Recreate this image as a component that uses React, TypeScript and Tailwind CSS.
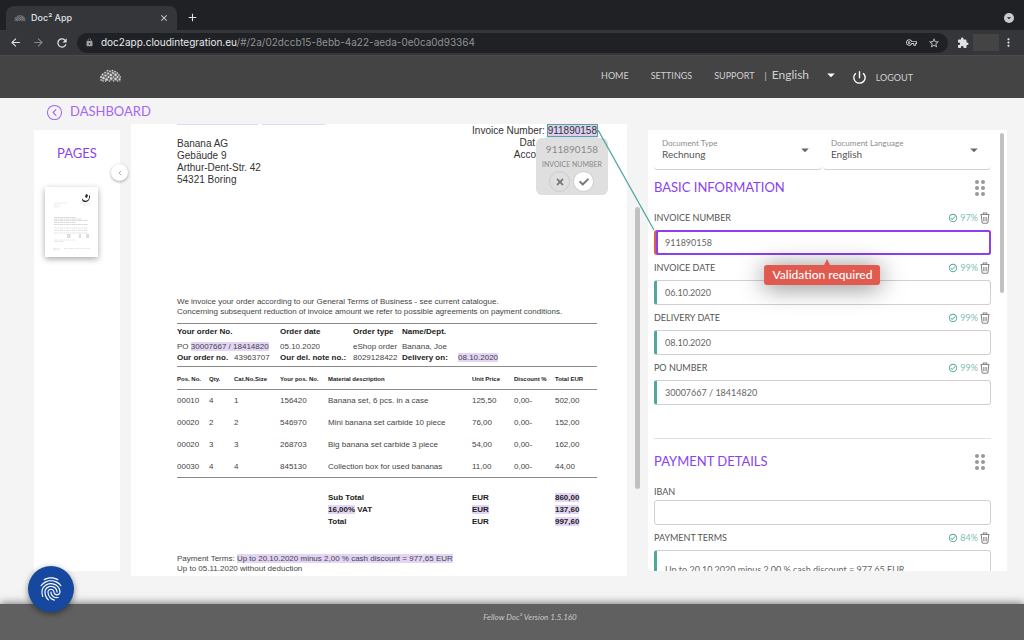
import type { ReactNode } from "react";
import { CircleChevronLeft, ChevronLeft } from "lucide-react";
import {
  MdArrowBack,
  MdArrowForward,
  MdRefresh,
  MdLock,
  MdOutlineVpnKey,
  MdStarBorder,
  MdExtension,
  MdMoreVert,
  MdPowerSettingsNew,
  MdFingerprint,
  MdArrowDropDown,
  MdOutlineCheckCircle,
  MdClose,
  MdAdd,
} from "react-icons/md";
import { FaCheck, FaTimes } from "react-icons/fa";

const brainDots: [number, number, number][] = [
  [2, 9, 1], [2, 12, 0.8], [3.5, 6.5, 0.9], [4.5, 10, 1.2], [4, 13, 0.8], [6, 4.5, 0.8],
  [6.5, 7.5, 1.1], [7.5, 11.5, 1.3], [8.5, 2.5, 0.8], [9, 5.5, 0.9], [9.5, 9, 1], [10.5, 13, 0.8],
  [11, 3.2, 0.8], [11.8, 7, 1.2], [12.2, 10.5, 1.2], [13.5, 2.5, 0.7], [14, 5, 0.9], [14.5, 9, 0.8],
  [14.6, 13, 0.7], [16, 3.5, 0.8], [16.5, 6.8, 1.2], [16.5, 11, 1.2], [18.3, 5, 0.8], [18.5, 9, 1],
  [18.5, 13, 0.8], [20, 7, 0.8], [20.6, 11.2, 1], [21.4, 9, 0.7], [6.6, 13.3, 0.6], [21, 13, 0.6],
];

function BrainLogo({ className }: { className: string }) {
  return (
    <svg viewBox="0 0 23 15" className={className} fill="currentColor" aria-hidden="true">
      <path d="M2 13C0 8 4 3 11.500 2 18 2 23 7 21 13z" opacity="0.25" />
      {brainDots.map(([x, y, r]) => (
        <circle key={`${x}-${y}`} cx={x} cy={y} r={r} />
      ))}
    </svg>
  );
}

function TrashIcon() {
  return (
    <svg viewBox="0 0 10 12" className="h-3 w-[10px]" fill="none" stroke="currentColor" aria-hidden="true">
      <path d="M0.500 2.500h9M3.300 2.300V1h3.400v1.300M1.300 3l.7 7.200c.1.700.5 1 1.100 1h3.800c.6 0 1-.3 1.100-1L8.700 3" strokeWidth="1.1" />
      <path d="M3.600 5v4.300M5 5v4.300M6.400 5v4.300" strokeWidth="0.8" />
    </svg>
  );
}

function BrowserBar() {
  return (
    <div className="shrink-0 bg-[#202124] font-['Inter',sans-serif] text-[#dfe1e5]">
      <div className="flex h-[30px] items-end pr-[10px] pl-[6px]">
        <div className="flex h-6 w-[171px] items-center rounded-t-lg bg-[#35363a] px-2">
          <BrainLogo className="h-[8px] w-[12px] text-[#9a9c9f]" />
          <span className="ml-[5px] flex-1 text-[9px] font-medium">Doc² App</span>
          <button aria-label="Close tab">
            <MdClose size={10} />
          </button>
        </div>
        <button aria-label="New tab" className="mb-[6px] ml-[9px]">
          <MdAdd size={13} />
        </button>
        <button
          aria-label="Search tabs"
          className="mb-[7px] ml-auto flex size-[10px] items-center justify-center rounded-full bg-[#c9cacc] text-[#202124]"
        >
          <MdArrowDropDown size={10} />
        </button>
      </div>
      <div className="flex h-[25px] items-center bg-[#35363a] pr-[9px] pl-[9px]">
        <button aria-label="Back"><MdArrowBack size={13} /></button>
        <button aria-label="Forward" className="ml-[10px] text-[#85878a]"><MdArrowForward size={13} /></button>
        <button aria-label="Reload" className="ml-[10px]"><MdRefresh size={14} /></button>
        <div className="ml-2 flex h-5 flex-1 items-center rounded-full bg-[#202124] px-2">
          <MdLock size={9} className="text-[#9aa0a6]" />
          <span className="ml-[7px] flex-1 text-[10px] text-[#8e9195]">
            <span className="text-[#e8eaed]">doc2app.cloudintegration.eu</span>
            /#/2a/02dccb15-8ebb-4a22-aeda-0e0ca0d93364
          </span>
          <MdOutlineVpnKey size={11} className="text-[#c9cacc]" />
          <MdStarBorder size={12} className="ml-[11px] text-[#c9cacc]" />
        </div>
        <button aria-label="Extensions" className="ml-[9px]"><MdExtension size={12} /></button>
        <div className="ml-1 h-[17px] w-[26px] bg-[#444444]" />
        <button aria-label="Browser menu" className="ml-[3px]"><MdMoreVert size={13} /></button>
      </div>
    </div>
  );
}

function SiteHeader() {
  return (
    <header className="flex h-[43px] shrink-0 items-center border-t border-[#4b4b4b] bg-[#444444] pr-[111px] pb-[3px] pl-[99px] text-[9px] text-[#d0d0d0]">
      <BrainLogo className="h-[15px] w-[23px] text-[#d8d8d8]" />
      <nav className="ml-auto flex items-center gap-[22px]">
        <a href="#home">HOME</a>
        <a href="#settings">SETTINGS</a>
        <a href="#support">SUPPORT</a>
      </nav>
      <span className="ml-[10px]">|</span>
      <label className="relative ml-[5px] flex w-[64px] items-center pb-[2px]">
        <select aria-label="Language" className="w-full appearance-none bg-transparent text-xs" defaultValue="English">
          <option>English</option>
        </select>
        <MdArrowDropDown size={18} className="pointer-events-none absolute -right-1 text-white" />
      </label>
      <a href="#logout" className="ml-[15px] flex items-center gap-2 pt-1">
        <MdPowerSettingsNew size={17} className="text-white" />
        LOGOUT
      </a>
    </header>
  );
}

function PageThumb() {
  return (
    <button aria-label="Page 1" className="mt-6 ml-[11px] block h-[70px] w-[53px] bg-white shadow-[0_2px_6px_rgba(0,0,0,0.35)]">
      <svg viewBox="0 0 53 70" className="size-full" aria-hidden="true">
        <path d="M37 11c1 3 6 4 7 0V8l1 1c0 5-3 6-5 6-2 0-3-1-3-4zM41 7l2 1-1 3-2-1z" fill="#222" />
        <g stroke="#b5b5b5" strokeWidth="0.5" strokeDasharray="3 0.5 2 0.5">
          <path d="M9 16h13M9 18h7M9 20h5M35 16h10M38 18h7" stroke="#d0d0d0" />
          <path d="M9 30.500h22M9 32h28M9 33.500h34M9 35.500h22M9 37.500h34" />
          <path d="M9 41h34M9 43.500h34M9 46h34" stroke="#c4c4c4" />
          <path d="M22 48h4M34 48h2M41 48h3M22 50h4M34 50h2M41 50h3" stroke="#777" />
          <path d="M9 53h22M9 54.500h10M8 61.500h7M19 61.500h26M8 63h6" stroke="#d0d0d0" />
        </g>
      </svg>
    </button>
  );
}

function Mark({ children }: { children: ReactNode }) {
  return <mark className="bg-[#e2d5f6] text-inherit">{children}</mark>;
}

const items = [
  ["00010", "4", "1", "156420", "Banana set, 6 pcs. in a case", "125,50", "0,00-", "502,00"],
  ["00020", "2", "2", "546970", "Mini banana set carbide 10 piece", "76,00", "0,00-", "152,00"],
  ["00020", "3", "3", "268703", "Big banana set carbide 3 piece", "54,00", "0,00-", "162,00"],
  ["00030", "4", "4", "845130", "Collection box for used bananas", "11,00", "0,00-", "44,00"],
];

function InvoiceDocument() {
  return (
    <section
      aria-label="Document"
      className="relative min-w-0 flex-1 overflow-hidden bg-white pr-[30px] pl-[46px] font-['Liberation_Sans',sans-serif] text-[8px] leading-[10px] text-[#444444]"
    >
      <div className="flex gap-1">
        <div className="h-px w-[81px] bg-[#e2d5f6]" />
        <div className="h-px w-[63px] bg-[#e2d5f6]" />
      </div>
      <div className="flex h-[172px] justify-between text-[10px] leading-3 text-[#333333]">
        <address className="pt-[13px] not-italic">
          Banana AG
          <br />
          Gebäude 9
          <br />
          Arthur-Dent-Str. 42
          <br />
          54321 Boring
        </address>
        <div className="flex flex-col items-end">
          <p>
            Invoice Number:{" "}
            <mark className="bg-[#dccff0] text-inherit outline outline-[#4fa89b]">911890158</mark>
          </p>
          <p className="flex gap-[11px]">
            Dat
            <span className="h-3 w-[51px] bg-[#e2d5f6]" />
          </p>
          <p className="pr-[61px]">Acco</p>
        </div>
      </div>

      <p>We invoice your order according to our General Terms of Business - see current catalogue.</p>
      <p>Concerning subsequent reduction of invoice amount we refer to possible agreements on payment conditions.</p>

      <table className="mt-[6px] w-full table-fixed border-y border-[#8a8a8a] text-left whitespace-nowrap">
        <colgroup>
          <col className="w-[57px]" />
          <col className="w-[46px]" />
          <col className="w-[73px]" />
          <col className="w-[49px]" />
          <col className="w-[56px]" />
          <col />
        </colgroup>
        <tbody>
          <tr className="h-[17px] text-[#222222]">
            <th colSpan={2}>Your order No.</th>
            <th>Order date</th>
            <th>Order type</th>
            <th colSpan={2}>Name/Dept.</th>
          </tr>
          <tr className="h-[12px]">
            <td colSpan={2}>PO <Mark>30007667 / 18414820</Mark></td>
            <td>05.10.2020</td>
            <td>eShop order</td>
            <td colSpan={2}>Banana, Joe</td>
          </tr>
          <tr className="h-[14px] align-top">
            <th className="text-[#222222]">Our order no.</th>
            <td>43963707</td>
            <th className="text-[#222222]">Our del. note no.:</th>
            <td>8029128422</td>
            <th className="text-[#222222]">Delivery on:</th>
            <td><Mark>08.10.2020</Mark></td>
          </tr>
        </tbody>
      </table>

      <table className="w-full table-fixed border-b border-[#8a8a8a] text-left whitespace-nowrap">
        <colgroup>
          <col className="w-[32px]" />
          <col className="w-[25px]" />
          <col className="w-[46px]" />
          <col className="w-[48px]" />
          <col />
          <col className="w-[42px]" />
          <col className="w-[41px]" />
          <col className="w-[42px]" />
        </colgroup>
        <thead>
          <tr className="h-[22px] border-b border-[#8a8a8a] text-[6px] text-[#222222]">
            <th className="pt-[2px]">Pos. No.</th>
            <th className="pt-[2px]">Qty.</th>
            <th className="pt-[2px]">Cat.No.Size</th>
            <th className="pt-[2px]">Your pos. No.</th>
            <th className="pt-[2px]">Material description</th>
            <th className="pt-[2px]">Unit Price</th>
            <th className="pt-[2px]">Discount %</th>
            <th className="pt-[2px]">Total EUR</th>
          </tr>
        </thead>
        <tbody>
          {items.map((row) => (
            <tr key={row[3]} className="h-[22px]">
              {row.map((cell, i) => (
                <td key={i} className="pt-[2px]">{cell}</td>
              ))}
            </tr>
          ))}
        </tbody>
      </table>

      <table className="mt-[14px] w-full table-fixed text-left font-bold text-[#222222]">
        <colgroup>
          <col className="w-[151px]" />
          <col />
          <col className="w-[83px]" />
          <col className="w-[42px]" />
        </colgroup>
        <tbody>
          <tr className="h-3">
            <td />
            <td>Sub Total</td>
            <td>EUR</td>
            <td><Mark>860,00</Mark></td>
          </tr>
          <tr className="h-3">
            <td />
            <td><Mark>16,00%</Mark> VAT</td>
            <td><Mark>EUR</Mark></td>
            <td><Mark>137,60</Mark></td>
          </tr>
          <tr className="h-3">
            <td />
            <td>Total</td>
            <td>EUR</td>
            <td><Mark>997,60</Mark></td>
          </tr>
        </tbody>
      </table>

      <p className="mt-[26px]">
        Payment Terms: <Mark>Up to 20.10.2020 minus 2,00 % cash discount = 977,65 EUR</Mark>
      </p>
      <p>Up to 05.11.2020 without deduction</p>

      <div className="absolute top-[14px] right-[19px] flex w-[72px] flex-col items-center rounded-md bg-[#dfdfdf] pt-1 pb-[3px] font-['Lato',sans-serif] text-[#8a8a8a]">
        <span className="text-[10px] leading-[14px]">911890158</span>
        <span className="mt-1 text-[7px] leading-[9px] whitespace-nowrap">INVOICE NUMBER</span>
        <div className="mt-[2px] flex gap-[3px]">
          <button aria-label="Reject" className="flex size-[21px] items-center justify-center rounded-full border border-[#cccccc] text-[#777777]">
            <FaTimes size={10} />
          </button>
          <button aria-label="Accept" className="flex size-[21px] items-center justify-center rounded-full border border-[#cccccc] bg-white text-[#777777]">
            <FaCheck size={10} />
          </button>
        </div>
      </div>
    </section>
  );
}

function PanelSelect({ id, label, value }: { id: string; label: string; value: string }) {
  return (
    <div className="relative flex h-[40px] flex-1 flex-col rounded-b-sm border-b border-[#d0d0d0] pt-2 pl-2">
      <label htmlFor={id} className="text-[8px] leading-[10px] text-[#8c8c8c]">{label}</label>
      <select
        id={id}
        defaultValue={value}
        className="w-full appearance-none bg-transparent text-[10px] leading-[12px] text-[#555555]"
      >
        <option>{value}</option>
      </select>
      <MdArrowDropDown size={18} className="pointer-events-none absolute top-[11px] right-2 text-[#666666]" />
    </div>
  );
}

function SectionTitle({ children, className }: { children: ReactNode; className: string }) {
  return (
    <div className={`flex items-center justify-between pr-[6px] ${className}`}>
      <h2 className="text-[13px] text-[#8a3ff0]">{children}</h2>
      <button aria-label="Reorder section" className="grid grid-cols-2 gap-[2px]">
        {[0, 1, 2, 3, 4, 5].map((i) => (
          <span key={i} className="size-1 rounded-full bg-[#999999]" />
        ))}
      </button>
    </div>
  );
}

function FieldLabel({ id, label, score }: { id: string; label: string; score: string }) {
  return (
    <div className="flex h-[25px] items-center text-[9px] text-[#555555]">
      <label htmlFor={id} className="flex-1">{label}</label>
      <MdOutlineCheckCircle size={10} className="text-[#4fa89b]" />
      <span className="ml-[2px] text-[#7fc0b6]">{score}</span>
      <button aria-label={`Delete ${label}`} className="mr-[1px] ml-[2px] text-[#888888]">
        <TrashIcon />
      </button>
    </div>
  );
}

const inputText = "text-[9px] text-[#666666]";

function Field({ id, label, score, value }: { id: string; label: string; score: string; value: string }) {
  return (
    <div>
      <FieldLabel id={id} label={label} score={score} />
      <input
        id={id}
        defaultValue={value}
        className={`block h-[25px] w-full rounded-[3px] border border-l-[3px] border-[#d0d0d0] border-l-[#4fa89b] pl-2 ${inputText}`}
      />
    </div>
  );
}

function FormPanel() {
  return (
    <aside className="relative mt-[6px] mb-[5px] w-[36.9%] shrink-0">
      <div className="flex h-full overflow-hidden bg-white pr-[3px] pl-[6px]">
        <form className="min-w-0 flex-1">
          <div className="flex gap-px">
            <PanelSelect id="doc-type" label="Document Type" value="Rechnung" />
            <PanelSelect id="doc-language" label="Document Language" value="English" />
          </div>
          <SectionTitle className="h-[35px]">BASIC INFORMATION</SectionTitle>
          <FieldLabel id="invoice-number" label="INVOICE NUMBER" score="97%" />
          <div className="relative rounded-[3px] bg-[#e05a50] pl-[2px]">
            <input
              id="invoice-number"
              defaultValue="911890158"
              autoFocus
              onFocus={(e) => e.currentTarget.setSelectionRange(9, 9)}
              className={`block h-[25px] w-full rounded-[3px] border-2 border-[#8a3ff0] bg-white pl-[7px] outline-none ${inputText}`}
            />
            <div
              role="tooltip"
              className="absolute top-[35px] left-1/2 z-10 -translate-x-1/2 rounded-[3px] bg-[#e05a50] px-2 text-xs leading-5 font-medium whitespace-nowrap text-white shadow-[0_2px_24px_rgba(0,0,0,0.5)]"
            >
              Validation required
              <svg viewBox="0 0 6 6" className="absolute -top-[6px] left-[60px] size-[6px]" aria-hidden="true">
                <path d="M3 0 6 6H0z" fill="#e05a50" />
              </svg>
            </div>
          </div>
          <Field id="invoice-date" label="INVOICE DATE" score="99%" value="06.10.2020" />
          <Field id="delivery-date" label="DELIVERY DATE" score="99%" value="08.10.2020" />
          <Field id="po-number" label="PO NUMBER" score="99%" value="30007667 / 18414820" />
          <hr className="mt-[33px] border-[#e2e2e2]" />
          <SectionTitle className="h-[45px]">PAYMENT DETAILS</SectionTitle>
          <label htmlFor="iban" className="block h-4 text-[9px] leading-4 text-[#555555]">IBAN</label>
          <input id="iban" className="block h-[25px] w-full rounded-[3px] border border-[#d0d0d0]" />
          <FieldLabel id="payment-terms" label="PAYMENT TERMS" score="84%" />
          <textarea
            id="payment-terms"
            rows={3}
            defaultValue="Up to 20.10.2020 minus 2,00 % cash discount = 977,65 EUR"
            className={`block w-full resize-none overflow-hidden rounded-[3px] border border-l-[3px] border-[#d0d0d0] border-l-[#4fa89b] pt-3 pl-2 ${inputText}`}
          />
        </form>
        <div className="mt-[3px] ml-[9px] h-[160px] w-1 rounded-full bg-[#c1c1c1]" />
      </div>
      <svg viewBox="0 0 57 101" className="pointer-events-none absolute top-0 -left-[50px] h-[101px] w-[57px]" aria-hidden="true">
        <path d="M0 0 56 100" stroke="#4fa89b" strokeWidth="1.3" />
      </svg>
    </aside>
  );
}

export default function App() {
  return (
    <div className="relative flex h-screen flex-col overflow-hidden bg-[#f4f4f4] font-['Lato',sans-serif]">
      <BrowserBar />
      <SiteHeader />
      <main className="flex min-h-0 flex-1 flex-col pr-[17px] pb-[28px] pl-[34px]">
        <a href="#dashboard" className="ml-3 flex h-[26px] shrink-0 items-center gap-[7px] pt-[2px] text-[13px] text-[#a566f5]">
          <CircleChevronLeft size={17} strokeWidth={1.5} />
          DASHBOARD
        </a>
        <div className="flex min-h-0 flex-1">
          <section className="relative mt-[6px] mr-[11px] mb-[5px] w-[86px] shrink-0 bg-white pt-[13px]">
            <h2 className="text-center text-[13px] leading-5 text-[#8a3ff0]">PAGES</h2>
            <PageThumb />
            <button
              aria-label="Collapse pages"
              className="absolute top-[34px] -right-2 z-10 flex size-[17px] items-center justify-center rounded-full bg-white text-[#888888] shadow-[0_1px_3px_rgba(0,0,0,0.35)]"
            >
              <ChevronLeft size={8} />
            </button>
          </section>
          <InvoiceDocument />
          <div className="mx-2 flex w-[5px] flex-col pt-[83px] pb-[87px]">
            <div className="flex-1 rounded-full bg-[#c1c1c1]" />
          </div>
          <FormPanel />
        </div>
      </main>
      <footer className="h-9 shrink-0 bg-[#606060] pt-[6px] pl-9 text-center text-[8px] leading-[14px] text-[#c8c8c8] italic shadow-[0_-1px_8px_rgba(0,0,0,0.5)]">
        Fellow Doc² Version 1.5.160
      </footer>
      <button
        aria-label="Fingerprint"
        className="absolute bottom-7 left-7 flex size-[46px] items-center justify-center rounded-full bg-[#1648a0] text-white shadow-[0_2px_6px_rgba(0,0,0,0.45)]"
      >
        <MdFingerprint size={28} />
      </button>
    </div>
  );
}
